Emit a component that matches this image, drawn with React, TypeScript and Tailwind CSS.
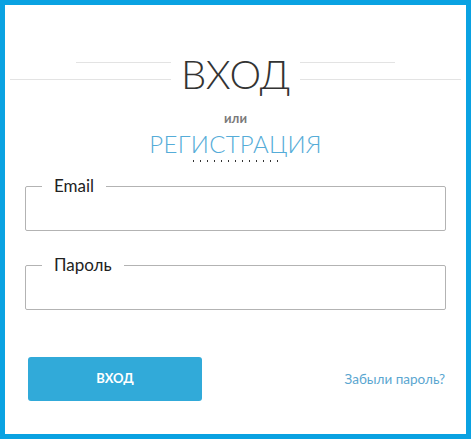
export default function App() {
  return (
    <div className="w-[471px] h-[439px] border-[5px] border-[#0aa2e2] bg-white" style={{ fontFamily: "Lato, 'Open Sans', sans-serif" }}>
      <div className="px-[5px] pt-[45px]">
        <div className="flex items-start">
          <div className="flex-1 flex flex-col items-end gap-4 pt-[12px]">
            <div className="w-[95px] h-px bg-[#e3e3e3]" />
            <div className="w-full h-px bg-[#e3e3e3]" />
          </div>
          <h1 className="px-[10px] text-[40px] leading-[48px] font-light text-[#333]">ВХОД</h1>
          <div className="flex-1 flex flex-col items-start gap-4 pt-[12px]">
            <div className="w-[95px] h-px bg-[#e3e3e3]" />
            <div className="w-full h-px bg-[#e3e3e3]" />
          </div>
        </div>
        <div className="flex flex-col items-center mt-[12px]">
          <span className="text-[13px] leading-4 font-bold text-[#7a7a7a]">или</span>
          <a className="mt-[4px] text-[24px] leading-[28px] font-light text-[#55acd8] tracking-[0.3px]">РЕГИСТРАЦИЯ</a>
          <div className="mt-[2px] w-[91px] h-[2px] bg-[radial-gradient(circle,#333_0.9px,transparent_1.1px)] bg-[length:7px_2px]" />
        </div>
      </div>
      <form className="px-[20px] mt-[14px] flex flex-col gap-[24px]">
        <fieldset className="h-[55px] border border-[#b3b3b3] rounded-[2px] pl-[16px] pr-3">
          <legend className="px-[12px] text-[17px] leading-5 text-[#222]">Email</legend>
        </fieldset>
        <fieldset className="h-[55px] border border-[#b3b3b3] rounded-[2px] pl-[16px] pr-3">
          <legend className="px-[12px] text-[17px] leading-5 text-[#222]">Пароль</legend>
        </fieldset>
      </form>
      <div className="pl-[23px] pr-[21px] mt-[47px] flex items-center justify-between">
        <button className="w-[174px] h-[44px] rounded-[3px] bg-[#31aad9] text-white text-[13px] font-bold">ВХОД</button>
        <a className="text-[13.5px] text-[#5aa6d0]">Забыли пароль?</a>
      </div>
    </div>
  );
}
